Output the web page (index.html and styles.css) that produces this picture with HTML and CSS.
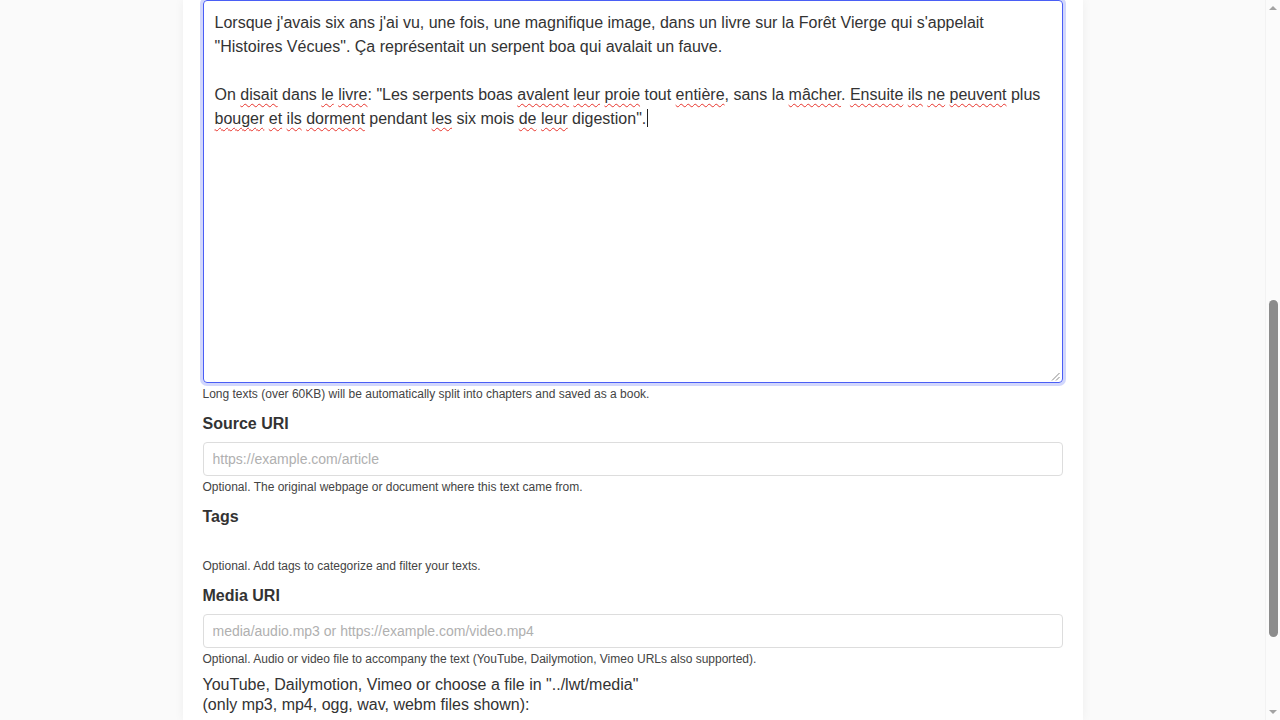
FILE: index.html
```html
<!DOCTYPE html>
<html lang="en">
<head>
    <meta charset="UTF-8">
    <meta name="viewport" content="width=device-width, initial-scale=1.0">
    <title>New Text</title>
    <link rel="stylesheet" href="styles.css">
</head>
<body>

<div class="viewport">
    <div class="card">
        <form id="textForm">
            <!-- Text body, shown with the spell checker marks -->
            <div class="form-group">
                <div class="editor focused" id="textBox" contenteditable="true" spellcheck="true">Lorsque j'avais six ans j'ai vu, une fois, une magnifique image, dans un livre sur la Forêt Vierge qui s'appelait "Histoires Vécues". Ça représentait un serpent boa qui avalait un fauve.<br><br>On <span class="typo">disait</span> dans <span class="typo">le</span> <span class="typo">livre</span>: "Les serpents boas <span class="typo">avalent</span> <span class="typo">leur</span> <span class="typo">proie</span> tout <span class="typo">entière</span>, sans la <span class="typo">mâcher</span>. <span class="typo">Ensuite</span> <span class="typo">ils</span> <span class="typo">ne</span> <span class="typo">peuvent</span> plus <span class="typo">bouger</span> <span class="typo">et</span> <span class="typo">ils</span> <span class="typo">dorment</span> pendant <span class="typo">les</span> six mois <span class="typo">de</span> <span class="typo">leur</span> digestion".<span class="caret"></span></div>
                    <svg class="grip" width="9" height="9" viewBox="0 0 9 9">
                        <line x1="1" y1="8.5" x2="8.5" y2="1" stroke="#888" stroke-width="1"/>
                        <line x1="5" y1="8.5" x2="8.5" y2="5" stroke="#888" stroke-width="1"/>
                    </svg>
                <p class="help">Long texts (over 60KB) will be automatically split into chapters and saved as a book.</p>
            </div>

            <div class="form-group">
                <label for="sourceUri">Source URI</label>
                <input type="url" id="sourceUri" class="field" placeholder="https://example.com/article">
                <p class="help">Optional. The original webpage or document where this text came from.</p>
            </div>

            <div class="form-group">
                <label>Tags</label>
                <ul class="tag-list" id="tagList">
                </ul>
                <p class="help">Optional. Add tags to categorize and filter your texts.</p>
            </div>

            <div class="form-group">
                <label for="mediaUri">Media URI</label>
                <input type="text" id="mediaUri" class="field" placeholder="media/audio.mp3 or https://example.com/video.mp4">
                <p class="help">Optional. Audio or video file to accompany the text (YouTube, Dailymotion, Vimeo URLs also supported).</p>
                <p class="media-note">YouTube, Dailymotion, Vimeo or choose a file in "../lwt/media"<br>(only mp3, mp4, ogg, wav, webm files shown):</p>
            </div>
        </form>
    </div>
</div>

<!-- Window scrollbar -->
<div class="scrollbar">
    <span class="arrow up"></span>
    <div class="track">
        <div class="thumb"></div>
    </div>
    <span class="arrow down"></span>
</div>

</body>
</html>
```

FILE: styles.css
```css
/* General styles */
html, body {
    height: 100%;
}

body {
    font-family: "Liberation Sans", Arial, sans-serif;
    background-color: #fafafa;
    color: #333;
    margin: 0;
    padding: 0;
    display: flex;
    overflow: hidden;
}

/* Page layout */
.viewport {
    flex: 1;
    display: flex;
    justify-content: center;
}

.card {
    width: 900px;
    padding: 0 20px;
    box-sizing: border-box;
    background-color: #fff;
    box-shadow: 0 0 10px rgba(0, 0, 0, 0.05);
}

/* Form fields */
.form-group {
    position: relative;
    margin-bottom: 13px;
}

.form-group label {
    display: block;
    font-weight: bold;
    font-size: 16px;
    line-height: 18px;
    padding-top: 1px;
    margin-bottom: 9px;
}

.field {
    display: block;
    width: 100%;
    box-sizing: border-box;
    padding: 8px 9px;
    border: 1px solid #ddd;
    border-radius: 4px;
    font-family: inherit;
    font-size: 14px;
    line-height: 16px;
    color: #333;
    background-color: #fff;
}

.field::placeholder {
    color: #b0b0b0;
}

.editor {
    height: 383px;
    box-sizing: border-box;
    padding: 10px 11px 8px;
    border: 1px solid #ddd;
    border-radius: 4px;
    font-size: 16px;
    line-height: 24px;
    color: #333;
    overflow: hidden;
}

.editor.focused,
.editor:focus {
    outline: none;
    border-color: #4a5ef5;
    box-shadow: 0 0 0 3px rgba(74, 94, 245, 0.25);
}

.typo {
    text-decoration: underline wavy #e8342c;
    text-decoration-thickness: 1px;
    text-underline-offset: 3px;
    text-decoration-skip-ink: none;
}

.caret {
    display: inline-block;
    width: 1px;
    height: 18px;
    margin-left: 1px;
    vertical-align: -3px;
    background-color: #222;
}

.grip {
    position: absolute;
    top: 372px;
    right: 3px;
}

.help {
    margin: 4px 0 0;
    font-size: 12px;
    line-height: 14px;
    color: #444;
}

.tag-list {
    list-style: none;
    margin: 0;
    padding: 0;
    height: 20px;
}

.media-note {
    margin: 9px 0 0;
    font-size: 16px;
    line-height: 20px;
    color: #333;
}

/* Scrollbar */
.scrollbar {
    width: 15px;
    display: flex;
    flex-direction: column;
    align-items: center;
    background-color: #fbfbfb;
    border-left: 1px solid #f2f2f2;
    box-sizing: border-box;
}

.arrow {
    width: 0;
    height: 0;
    border-left: 4px solid transparent;
    border-right: 4px solid transparent;
}

.arrow.up {
    margin-top: 6px;
    border-bottom: 4px solid #a3a3a3;
}

.arrow.down {
    margin-bottom: 6px;
    border-top: 4px solid #a3a3a3;
}

.track {
    flex: 1;
    width: 100%;
    display: flex;
    justify-content: center;
}

.thumb {
    width: 9px;
    height: 337px;
    margin-top: 290px;
    border-radius: 5px;
    background-color: #8c8c8c;
}
```
